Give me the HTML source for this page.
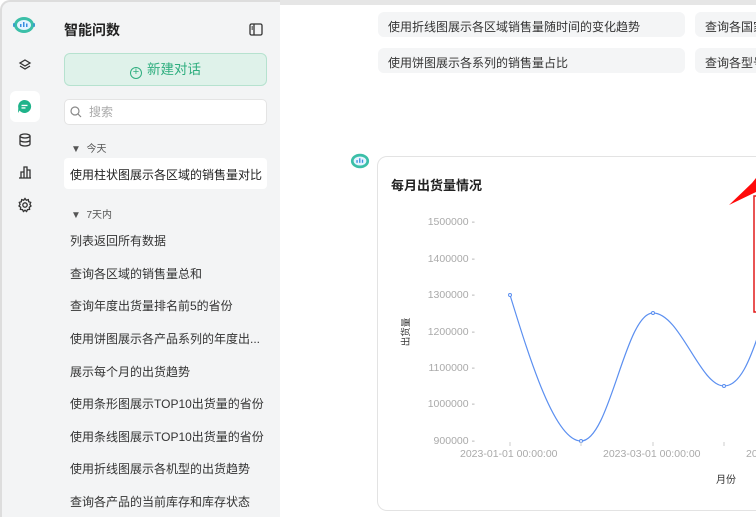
<html><head><meta charset="utf-8"><style>
*{margin:0;padding:0;box-sizing:border-box}
body{width:756px;height:517px;overflow:hidden;background:#fff;font-family:"Liberation Sans","Noto Sans CJK SC",sans-serif;position:relative;color:#222}
.rail{position:absolute;left:0;top:0;width:44px;height:517px;background:#f3f4f5;border-left:2px solid #ddd;border-top:2px solid #ddd;border-top-left-radius:10px}
.side{position:absolute;left:44px;top:0;width:236px;height:517px;background:#f3f4f5;border-top:2px solid #ddd}
.main{position:absolute;left:280px;top:0;width:476px;height:517px;background:#fff;border-top:5px solid #e6e6e6}
.abs{position:absolute}
.item{position:absolute;left:70px;font-size:12px;color:#333}
.chip{position:absolute;height:25px;background:#f4f5f6;border-radius:6px;font-size:12px;color:#333;padding:6px 10px;white-space:nowrap;overflow:hidden}
.yl{position:absolute;font-size:10.5px;color:#aaa;width:100px;text-align:right}
</style></head><body>
<div class="rail"></div>
<div class="side"></div>
<div class="main"></div>
<svg class="abs" style="left:12px;top:14px" width="24" height="22" viewBox="0 0 24 22"><ellipse cx="12" cy="11" rx="10" ry="8" fill="#3bbfa8"/><ellipse cx="12" cy="11" rx="7" ry="5" fill="#e6f4ff"/><rect x="8" y="10" width="1.5" height="3" fill="#3a8ee0"/><rect x="11" y="8" width="1.5" height="5" fill="#3a8ee0"/><rect x="14" y="9.5" width="1.5" height="3.5" fill="#3a8ee0"/><rect x="1" y="9" width="2" height="4" rx="1" fill="#3a9ecc"/><rect x="21" y="9" width="2" height="4" rx="1" fill="#3a9ecc"/></svg>
<svg class="abs" style="left:18px;top:58px" width="14" height="14" viewBox="0 0 14 14" fill="none" stroke="#333" stroke-width="1.3"><path d="M7 2L12 5L7 8L2 5Z"/><path d="M2 8L7 11L12 8"/></svg>
<div class="abs" style="left:10px;top:91px;width:30px;height:31px;background:#fff;border-radius:6px"></div>
<svg class="abs" style="left:17px;top:99px" width="15" height="15" viewBox="0 0 15 15"><path d="M7.5 1A6.5 6.5 0 1 1 2.5 11.5L1 14L1.3 9A6.5 6.5 0 0 1 7.5 1Z" fill="#1fb38a"/><rect x="4.5" y="5.8" width="6" height="1.3" fill="#fff"/><rect x="4.5" y="8.3" width="4" height="1.3" fill="#fff"/></svg>
<svg class="abs" style="left:18px;top:133px" width="14" height="14" viewBox="0 0 14 14" fill="none" stroke="#333" stroke-width="1.3"><ellipse cx="7" cy="3" rx="5" ry="2"/><path d="M2 3V11C2 12 4 13 7 13C10 13 12 12 12 11V3M2 7C2 8 4 9 7 9C10 9 12 8 12 7"/></svg>
<svg class="abs" style="left:18px;top:165px" width="14" height="14" viewBox="0 0 14 14" fill="none" stroke="#333" stroke-width="1.3"><path d="M1 13H13M3 13V7H6V13M6 13V2H9V13M9 13V5H12V13"/></svg>
<svg class="abs" style="left:17px;top:197px" width="16" height="16" viewBox="0 0 16 16" fill="none" stroke="#333" stroke-width="1.3"><circle cx="8" cy="8" r="2.2"/><path d="M8 1.5L9.3 3.2L11.3 2.6L11.7 4.7L13.7 5.4L12.9 7.4L14 9L12.3 10.3L12.6 12.4L10.5 12.6L9.6 14.5L8 13.2L6.4 14.5L5.5 12.6L3.4 12.4L3.7 10.3L2 9L3.1 7.4L2.3 5.4L4.3 4.7L4.7 2.6L6.7 3.2Z"/></svg>
<div class="abs" style="left:64px;top:20px;font-size:14px;font-weight:bold;color:#222">智能问数</div>
<svg class="abs" style="left:249px;top:23px" width="14" height="13" viewBox="0 0 14 13" fill="none" stroke="#333" stroke-width="1.3"><rect x="1" y="1" width="12" height="11" rx="1.5"/><path d="M5 1V12M2.5 4H4M2.5 6H4"/></svg>
<div class="abs" style="left:64px;top:53px;width:203px;height:33px;background:#dff2ea;border:1px solid #b6e2cf;border-radius:6px;color:#2fae7f;font-size:13.5px;text-align:center;line-height:31px"><span style="display:inline-block;width:12px;height:12px;border:1.3px solid #2fae7f;border-radius:50%;font-size:11px;line-height:9px;vertical-align:-1px;margin-right:5px">+</span>新建对话</div>
<div class="abs" style="left:64px;top:99px;width:203px;height:26px;background:#fff;border:1px solid #e4e4e4;border-radius:5px;font-size:12px;color:#aaa;line-height:24px;padding-left:24px">搜索</div>
<svg class="abs" style="left:70px;top:106px" width="12" height="12" viewBox="0 0 12 12" fill="none" stroke="#888" stroke-width="1.2"><circle cx="5" cy="5" r="4"/><path d="M8 8L11 11"/></svg>
<div class="abs" style="left:71px;top:140px;font-size:10px;color:#555">▼ &nbsp;今天</div>
<div class="abs" style="left:64px;top:158px;width:203px;height:31px;background:#fff;border-radius:4px"></div>
<div class="item" style="top:166px;color:#222">使用柱状图展示各区域的销售量对比</div>
<div class="abs" style="left:71px;top:206px;font-size:10px;color:#555">▼ &nbsp;7天内</div>
<div class="item" style="top:232px">列表返回所有数据</div>
<div class="item" style="top:265px">查询各区域的销售量总和</div>
<div class="item" style="top:297px">查询年度出货量排名前5的省份</div>
<div class="item" style="top:330px">使用饼图展示各产品系列的年度出...</div>
<div class="item" style="top:363px">展示每个月的出货趋势</div>
<div class="item" style="top:395px">使用条形图展示TOP10出货量的省份</div>
<div class="item" style="top:428px">使用条线图展示TOP10出货量的省份</div>
<div class="item" style="top:460px">使用折线图展示各机型的出货趋势</div>
<div class="item" style="top:493px">查询各产品的当前库存和库存状态</div>
<div class="chip" style="left:378px;top:12px;width:307px">使用折线图展示各区域销售量随时间的变化趋势</div>
<div class="chip" style="left:695px;top:12px;width:70px">查询各国家</div>
<div class="chip" style="left:378px;top:48px;width:307px">使用饼图展示各系列的销售量占比</div>
<div class="chip" style="left:695px;top:48px;width:70px">查询各型号</div>
<svg class="abs" style="left:348px;top:151px" width="24" height="20" viewBox="0 0 24 22"><ellipse cx="12" cy="11" rx="10" ry="8" fill="#3bbfa8"/><ellipse cx="12" cy="11" rx="7" ry="5" fill="#e6f4ff"/><rect x="8" y="10" width="1.5" height="3" fill="#3a8ee0"/><rect x="11" y="8" width="1.5" height="5" fill="#3a8ee0"/><rect x="14" y="9.5" width="1.5" height="3.5" fill="#3a8ee0"/></svg>
<div class="abs" style="left:377px;top:156px;width:400px;height:355px;border:1px solid #e3e3e3;border-radius:10px;background:#fff"></div>
<div class="abs" style="left:391px;top:175px;font-size:13px;font-weight:bold;color:#222">每月出货量情况</div>
<div class="yl" style="left:375px;top:216px">1500000 -</div>
<div class="yl" style="left:375px;top:253px">1400000 -</div>
<div class="yl" style="left:375px;top:289px">1300000 -</div>
<div class="yl" style="left:375px;top:326px">1200000 -</div>
<div class="yl" style="left:375px;top:362px">1100000 -</div>
<div class="yl" style="left:375px;top:398px">1000000 -</div>
<div class="yl" style="left:375px;top:435px">900000 -</div>
<div class="abs" style="left:390px;top:325px;width:30px;text-align:center;font-size:9.5px;color:#333;transform:rotate(-90deg)">出货量</div>
<svg class="abs" style="left:0;top:0" width="756" height="517">
<path d="M510 295 C530 360 555 441 581 441 C610 441 625 313 653 313 C680 313 700 386 724 386 C740 386 750 360 760 330" fill="none" stroke="#5b8ff0" stroke-width="1.2"/>
<g fill="#fff" stroke="#5b8ff0" stroke-width="1"><circle cx="510" cy="295" r="1.5"/><circle cx="581" cy="441" r="1.5"/><circle cx="653" cy="313" r="1.5"/><circle cx="724" cy="386" r="1.5"/></g>
<g stroke="#ccc"><path d="M510 442V446M581 442V446M653 442V446M724 442V446"/></g>
<rect x="754" y="196" width="10" height="116" fill="none" stroke="#e21a1a" stroke-width="1.5"/>
<path d="M729 205L752 183L756 178L756 192Z" fill="#ff0a0a"/>
</svg>
<div class="abs" style="left:460px;top:448px;font-size:10.5px;color:#aaa">2023-01-01 00:00:00</div>
<div class="abs" style="left:603px;top:448px;font-size:10.5px;color:#aaa">2023-03-01 00:00:00</div>
<div class="abs" style="left:746px;top:448px;font-size:10.5px;color:#aaa">20</div>
<div class="abs" style="left:716px;top:471px;font-size:10px;color:#333">月份</div>
</body></html>
